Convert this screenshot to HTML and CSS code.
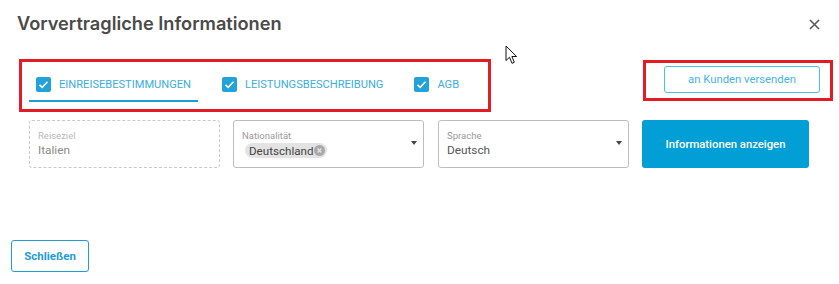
FILE: index.html
```html
<!DOCTYPE html>
<html lang="de">
<head>
<meta charset="utf-8">
<title>Vorvertragliche Informationen</title>
<link rel="stylesheet" href="styles.css">
</head>
<body>
<div class="dialog">
  <header class="dialog-header">
    <h1 class="dialog-title">Vorvertragliche Informationen</h1>
    <button class="close-btn" aria-label="Schließen">
      <svg width="11" height="11" viewBox="0 0 11 11"><path d="M1 1L10 10M10 1L1 10" stroke="#555" stroke-width="1.5" fill="none"/></svg>
    </button>
  </header>

  <div class="top-row">
    <div class="mark tabs-mark">
      <div class="tabs">
        <div class="tab active">
          <span class="cb"><svg width="15" height="15" viewBox="0 0 15 15"><path d="M3.5 7.8L6.2 10.3L11.5 4.8" stroke="#fff" stroke-width="1.6" fill="none"/></svg></span>
          <span class="tab-label">EINREISEBESTIMMUNGEN</span>
        </div>
        <div class="tab">
          <span class="cb"><svg width="15" height="15" viewBox="0 0 15 15"><path d="M3.5 7.8L6.2 10.3L11.5 4.8" stroke="#fff" stroke-width="1.6" fill="none"/></svg></span>
          <span class="tab-label">LEISTUNGSBESCHREIBUNG</span>
        </div>
        <div class="tab">
          <span class="cb"><svg width="15" height="15" viewBox="0 0 15 15"><path d="M3.5 7.8L6.2 10.3L11.5 4.8" stroke="#fff" stroke-width="1.6" fill="none"/></svg></span>
          <span class="tab-label">AGB</span>
        </div>
      </div>
    </div>
    <div class="mark send-mark">
      <button class="send-btn">an Kunden versenden</button>
    </div>
  </div>

  <div class="fields">
    <div class="field dashed">
      <span class="field-label">Reiseziel</span>
      <span class="field-value muted">Italien</span>
    </div>
    <div class="field select">
      <span class="field-label">Nationalität</span>
      <span class="chip">Deutschland<span class="chip-x"><svg width="11" height="11" viewBox="0 0 11 11"><circle cx="5.5" cy="5.5" r="5.5" fill="#a8a8a8"/><path d="M3.6 3.6L7.4 7.4M7.4 3.6L3.6 7.4" stroke="#e4e4e4" stroke-width="1.4"/></svg></span></span>
      <span class="caret"></span>
    </div>
    <div class="field select lang">
      <span class="field-label">Sprache</span>
      <span class="field-value">Deutsch</span>
      <span class="caret"></span>
    </div>
    <button class="primary-btn">Informationen anzeigen</button>
  </div>

  <footer class="dialog-footer">
    <button class="outline-btn">Schließen</button>
  </footer>

  <svg class="cursor" width="14" height="20" viewBox="0 0 14 20"><path d="M1 1L1 15.5L4.5 12.3L7 18.3L9.3 17.3L6.9 11.5L11.6 11.5Z" fill="#fff" stroke="#111" stroke-width="1" stroke-linejoin="round"/></svg>
</div>
</body>
</html>
```

FILE: styles.css
```css
* { box-sizing: border-box; }
html, body { margin: 0; padding: 0; background: #fff; }
body { font-family: Roboto, "Noto Sans", "Liberation Sans", sans-serif; width: 839px; height: 284px; overflow: hidden; }

.dialog { position: relative; width: 839px; height: 284px; }

.dialog-header { display: flex; justify-content: space-between; align-items: center; padding: 10px 19px 0 17px; height: 35px; }
.dialog-title { margin: 0; font-family: Inter, "Noto Sans", sans-serif; font-size: 18.2px; font-weight: 600; color: #4a4a4a; }
.close-btn { border: 0; background: none; padding: 0; width: 11px; height: 11px; display: flex; margin-top: 4px; }

.top-row { display: flex; justify-content: space-between; align-items: flex-start; padding: 24px 6px 0 19px; }
.mark { border: 3px solid #e21b24; }
.tabs-mark { width: 472px; padding: 0 0 7px 7px; }
.tabs { display: flex; gap: 17px; }
.tab { display: flex; align-items: flex-start; gap: 8px; padding: 15px 7px 0; height: 40px; border-bottom: 2px solid transparent; }
.tab.active { border-bottom-color: #1f9bd5; }
.cb { width: 15px; height: 15px; background: #21a3d9; border-radius: 2px; display: flex; }
.tab-label { font-size: 11.1px; line-height: 15px; color: #3badde; }

.send-mark { margin-top: 1px; width: 190px; padding: 3px 10px 5px 18px; }
.send-btn { width: 156px; height: 27px; border: 1px solid #4cbde6; border-radius: 3px; background: #fff; color: #45b5e2; font-family: inherit; font-size: 11.3px; padding: 0; }

.fields { display: flex; gap: 13px; padding: 8px 0 0 29px; }
.field { position: relative; width: 191px; height: 48px; border: 1px solid #bdbdbd; border-radius: 3px; padding: 9px 8px 0; display: flex; flex-direction: column; align-items: flex-start; }
.field.lang { margin-left: 1px; }
.field.dashed { border: 1px dashed #c9c9c9; }
.field-label { font-size: 9.5px; line-height: 11px; color: #9a9a9a; }
.field.dashed .field-label { color: #b9b9b9; }
.field-value { font-size: 11.8px; line-height: 16px; color: #555; margin-top: 1px; }
.field-value.muted { color: #8a8a8a; }
.chip { display: inline-flex; align-items: center; gap: 1px; background: #e3e3e3; border-radius: 8px; height: 15px; padding: 0 2px 0 4px; margin-top: 2px; font-size: 11.6px; color: #444; margin-left: 3px; }
.chip-x { display: flex; }
.caret { position: absolute; right: 6px; top: 20px; width: 0; height: 0; border-left: 3.5px solid transparent; border-right: 3.5px solid transparent; border-top: 4px solid #444; }

.primary-btn { width: 167px; height: 48px; border: 0; border-radius: 3px; background: #019fd5; color: #fff; font-family: inherit; font-size: 11.3px; font-weight: 500; }

.dialog-footer { padding: 72px 0 0 11px; }
.outline-btn { width: 78px; height: 32px; border: 1.5px solid #1f9bd5; border-radius: 3px; background: #fff; color: #1f9bd5; font-family: inherit; font-size: 11.5px; font-weight: 700; padding: 0; }

.cursor { position: absolute; left: 505px; top: 45px; }
```
